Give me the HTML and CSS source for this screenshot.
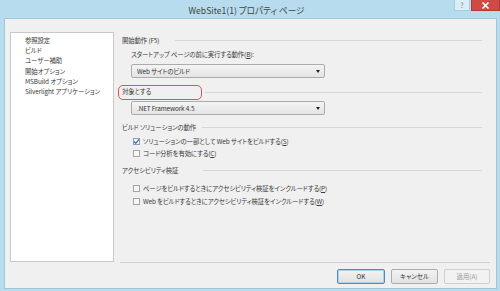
FILE: index.html
```html
<!DOCTYPE html>
<html lang="ja">
<head>
<meta charset="utf-8">
<link rel="stylesheet" href="styles.css">
</head>
<body>
<div class="window">
  <div class="titlebar">
    <div class="title">WebSite1(1) プロパティ ページ</div>
    <div class="caption-buttons">
      <div class="cap help">?</div>
      <div class="cap close">
        <svg width="9" height="7" viewBox="0 0 9 7"><path d="M1.5 0.5 L7.5 6.5 M7.5 0.5 L1.5 6.5" stroke="#fff" stroke-width="1.6"/></svg>
      </div>
    </div>
  </div>
  <div class="client">
    <div class="main">
      <ul class="nav">
        <li>参照設定</li>
        <li>ビルド</li>
        <li>ユーザー補助</li>
        <li>開始オプション</li>
        <li>MSBuild オプション</li>
        <li>Silverlight アプリケーション</li>
      </ul>
      <div class="panel">
        <div class="group-head h1"><span>開始動作 (F5)</span><i class="rule r1"></i></div>
        <div class="label">スタートアップ ページの前に実行する動作(<u>B</u>):</div>
        <div class="select s1"><span>Web サイトのビルド</span><b class="arrow"></b></div>
        <div class="group-head h2"><span class="marked">対象とする</span><i class="rule r2"></i></div>
        <div class="select s2"><span>.NET Framework 4.5</span><b class="arrow"></b></div>
        <div class="group-head h3"><span>ビルド ソリューションの動作</span><i class="rule r3"></i></div>
        <div class="check c1"><span class="box checked"><svg width="7" height="7" viewBox="0 0 7 7"><path d="M1 3.5 L2.8 5.3 L6 1.3" fill="none" stroke="#3b6fb0" stroke-width="1.3"/></svg></span>ソリューションの一部として Web サイトをビルドする(<u>S</u>)</div>
        <div class="check c2"><span class="box"></span>コード分析を有効にする(<u>C</u>)</div>
        <div class="group-head h4"><span>アクセシビリティ検証</span><i class="rule r4"></i></div>
        <div class="check c3"><span class="box"></span>ページをビルドするときにアクセシビリティ検証をインクルードする(<u>P</u>)</div>
        <div class="check c4"><span class="box"></span>Web をビルドするときにアクセシビリティ検証をインクルードする(<u>W</u>)</div>
      </div>
    </div>
    <div class="footer">
      <div class="btn default">OK</div>
      <div class="btn">キャンセル</div>
      <div class="btn disabled">適用(A)</div>
    </div>
  </div>
</div>
</body>
</html>
```
FILE: styles.css
```css
html, body {
  margin: 0;
  padding: 0;
  background: #fff;
}
body {
  font-family: "Noto Sans CJK JP", "Noto Sans", sans-serif;
  color: #3a3a3a;
  font-feature-settings: "palt";
}
.window {
  width: 500px;
  height: 291px;
  box-sizing: border-box;
  background: #b6dcee;
  padding: 0 3px 2px 4px;
  display: flex;
  flex-direction: column;
}
.titlebar {
  height: 18px;
  display: grid;
  grid-template-columns: 1fr auto 1fr;
  align-items: start;
}
.title {
  grid-column: 2;
  font-size: 8.6px;
  line-height: 20px;
  color: #444;
  white-space: nowrap;
  margin-right: 8px;
}
.caption-buttons {
  grid-column: 3;
  justify-self: end;
  display: flex;
  margin-right: -3px;
}
.cap {
  height: 11px;
  display: flex;
  align-items: center;
  justify-content: center;
  box-sizing: border-box;
}
.help {
  width: 16px;
  background: #dcedf5;
  border: 1px solid #a6cde0;
  border-top: none;
  font-size: 7px;
  color: #6a8aa0;
  margin-right: 1px;
}
.close {
  width: 29px;
  background: #cf4a45;
  border: 1px solid #b03a36;
  border-top: none;
}
.client {
  flex: 1;
  background: #f0f0f0;
  border: 1px solid #9fc6d9;
  padding: 13px 6px 4px 5px;
  display: flex;
  flex-direction: column;
}
.main {
  display: flex;
  height: 231px;
}
.nav {
  list-style: none;
  margin: 0;
  width: 104px;
  height: 230px;
  box-sizing: border-box;
  background: #fff;
  border: 1px solid #c9c9c9;
  padding: 3px 0 0 14px;
  font-size: 6.4px;
  line-height: 10.2px;
  letter-spacing: -0.1px;
  white-space: nowrap;
  color: #3a3a3a;
}
.panel {
  flex: 1;
  margin-left: 6px;
  border-bottom: 1px solid #d2d2d2;
  padding: 2px 8px 0 2px;
  font-size: 6.4px;
  letter-spacing: -0.12px;
}
.group-head {
  display: flex;
  align-items: center;
  height: 12px;
  white-space: nowrap;
}
.rule {
  flex: 1;
  height: 1px;
  background: #d6d6d6;
}
.r1 { margin-left: 16px; }
.r2 { margin-left: 3px; }
.r3 { margin-left: 6px; }
.r4 { margin-left: 25px; }
.h2 {
  margin-top: 7px;
  height: 15px;
  margin-left: -4px;
}
.marked {
  box-sizing: border-box;
  width: 84px;
  height: 15px;
  border: 1.5px solid #e0505e;
  border-radius: 5px;
  padding-left: 3px;
  line-height: 12px;
}
.h3 { margin-top: 6px; }
.h4 { margin-top: 5px; }
.label {
  margin: 3px 0 0 9px;
  height: 12px;
  line-height: 12px;
}
u { text-decoration: underline; }
.select {
  margin-left: 9px;
  width: 194px;
  height: 14px;
  box-sizing: border-box;
  border: 1px solid #acacac;
  border-radius: 2px;
  background: linear-gradient(#f4f4f4, #e4e4e4);
  display: flex;
  align-items: center;
  justify-content: space-between;
  padding: 0 4px 0 5px;
  color: #333;
}
.s1 { margin-top: 3px; }
.s2 { margin-top: 1px; }
.arrow {
  width: 0;
  height: 0;
  border-left: 2.5px solid transparent;
  border-right: 2.5px solid transparent;
  border-top: 3px solid #222;
}
.check {
  display: flex;
  align-items: center;
  height: 12px;
  margin-left: 11px;
  white-space: nowrap;
}
.c1 { margin-top: 2px; }
.c3 { margin-top: 6px; }
.c4 { margin-top: 1px; }
.box {
  width: 7px;
  height: 7px;
  box-sizing: border-box;
  border: 1px solid #a5a5a5;
  background: #f7f7f7;
  margin-right: 3px;
  display: flex;
  align-items: center;
  justify-content: center;
  flex: none;
}
.box.checked {
  border-color: #8a9fb8;
}
.box svg { flex: none; }
.footer {
  margin-top: 6px;
  height: 15px;
  display: flex;
  justify-content: flex-end;
  gap: 6px;
}
.btn {
  width: 47px;
  height: 15px;
  box-sizing: border-box;
  border: 1px solid #acacac;
  border-radius: 2px;
  background: linear-gradient(#f2f2f2, #e2e2e2);
  font-size: 6.4px;
  display: flex;
  align-items: center;
  justify-content: center;
  color: #333;
}
.btn.default {
  width: 48px;
  border: 1px solid #4a8cc4;
  box-shadow: inset 0 0 0 1px #a9d2ef;
}
.btn.disabled {
  width: 46px;
  border-color: #cfcfcf;
  background: #f2f2f2;
  color: #9c9c9c;
}
```
